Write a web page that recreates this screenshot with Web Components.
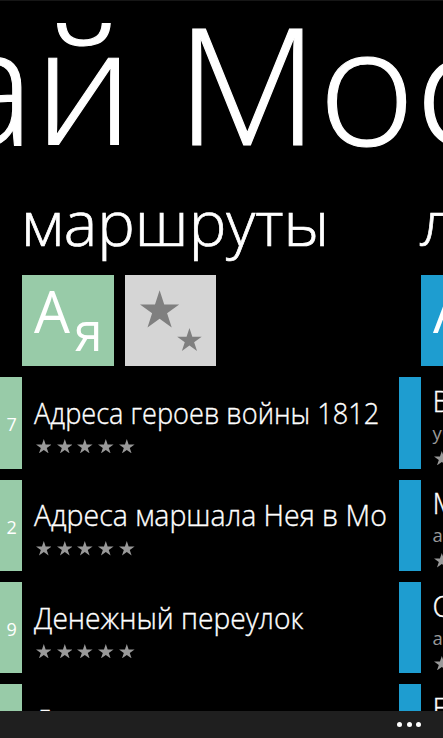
<!DOCTYPE html>
<html lang="ru">
<head>
<meta charset="utf-8">
<title>Узнай Москву</title>
<style>
    html, body {
        margin: 0;
        height: 100%;
        background: #000;
        overflow: hidden;
    }
</style>
</head>
<body>
<city-app></city-app>
<script>
const STAR = '50,0 61.8,36.3 100,36.3 69.1,58.8 80.9,95.1 50,72.7 19.1,95.1 30.9,58.8 0,36.3 38.2,36.3';

// One line of text, stretched to the pixels in "width" or by the factor in "stretch"
class FitText extends HTMLElement {
    constructor() {
        super();
        this.attachShadow({ mode: 'open' });
    }

    connectedCallback() {
        this.shadowRoot.innerHTML = `
            <style>
                :host { display: flex; white-space: nowrap; }
                span { display: block; flex: none; transform-origin: 0 50%; }
            </style>
            <span><slot></slot></span>`;
        requestAnimationFrame(() => this.fit());
    }

    fit() {
        const span = this.shadowRoot.querySelector('span');
        const target = parseFloat(this.getAttribute('width'));
        const factor = target ? target / span.offsetWidth : parseFloat(this.getAttribute('stretch'));
        if (factor) {
            span.style.transform = `scaleX(${factor})`;
        }
    }
}

class StarRating extends HTMLElement {
    constructor() {
        super();
        this.attachShadow({ mode: 'open' });
    }

    connectedCallback() {
        const star = `<svg viewBox="0 0 100 95.1" preserveAspectRatio="none"><polygon points="${STAR}"/></svg>`;
        this.shadowRoot.innerHTML = `
            <style>
                :host { display: flex; gap: 5.2px; padding-left: 2px; }
                svg { width: 15.6px; height: 14.4px; fill: #999; flex: none; }
            </style>
            ${star.repeat(5)}`;
    }
}

class HubTile extends HTMLElement {
    constructor() {
        super();
        this.attachShadow({ mode: 'open' });
    }

    connectedCallback() {
        const stars = `
            <svg viewBox="0 0 91.5 91.5">
                <polygon transform="translate(15 15.3) scale(.392 .39)" points="${STAR}"/>
                <polygon transform="translate(52.2 53) scale(.245 .242)" points="${STAR}"/>
            </svg>`;
        const letters = `
            <svg viewBox="0 0 91.5 91.5">
                <text x="12" y="58.4" font-size="58.5" textLength="36" lengthAdjust="spacingAndGlyphs">А</text>
                <text x="52.5" y="75.8" font-size="55" textLength="28" lengthAdjust="spacingAndGlyphs">я</text>
            </svg>`;
        this.shadowRoot.innerHTML = `
            <style>
                :host { display: block; width: 91.5px; height: 91.3px; flex: none; background: var(--accent); }
                svg { display: block; width: 91.5px; height: 91.5px; }
                text { fill: #fff; font-weight: 400; }
                polygon { fill: #7f7f7f; }
            </style>
            ${this.getAttribute('kind') === 'stars' ? stars : letters}`;
    }
}

class HubRow extends HTMLElement {
    constructor() {
        super();
        this.attachShadow({ mode: 'open' });
    }

    connectedCallback() {
        const note = this.getAttribute('note');
        this.shadowRoot.innerHTML = `
            <style>
                :host { display: flex; height: 91.4px; flex: none; }
                .bar {
                    display: flex;
                    align-items: center;
                    justify-content: flex-end;
                    box-sizing: border-box;
                    width: 22.3px;
                    padding: 3px 5.5px 0 0;
                    flex: none;
                    background: var(--accent);
                    color: #fff;
                    font-size: 18px;
                    font-weight: 400;
                }
                .body {
                    display: flex;
                    flex-direction: column;
                    justify-content: center;
                    padding-left: 11.5px;
                    color: #fff;
                    font-size: 28.7px;
                    line-height: 40px;
                }
                fit-text { -webkit-text-stroke: .35px #fff; }
                .note { color: #999; font-size: 18.5px; font-weight: 400; line-height: 24px; white-space: nowrap; }
                star-rating { margin-top: 6px; }
            </style>
            <div class="bar">${this.getAttribute('count') || ''}</div>
            <div class="body">
                <fit-text width="${this.getAttribute('text-width') || ''}"><slot></slot></fit-text>
                ${note ? `<div class="note">${note}</div>` : ''}
                <star-rating></star-rating>
            </div>`;
    }
}

class HubSection extends HTMLElement {
    constructor() {
        super();
        this.attachShadow({ mode: 'open' });
    }

    connectedCallback() {
        this.shadowRoot.innerHTML = `
            <style>
                :host { display: flex; flex-direction: column; flex: none; }
                .title {
                    height: 95px;
                    padding-left: 21px;
                    box-sizing: border-box;
                    flex: none;
                    color: #fff;
                    font-size: 62px;
                    line-height: 85px;
                    -webkit-text-stroke: .7px #fff;
                }
                .tiles { display: flex; gap: 11px; padding-left: 22.2px; margin-bottom: 11px; }
                .rows { display: flex; flex-direction: column; gap: 11px; }
            </style>
            <div class="title"><fit-text width="${this.getAttribute('title-width') || ''}">${this.getAttribute('heading')}</fit-text></div>
            <div class="tiles"><slot name="tile"></slot></div>
            <div class="rows"><slot></slot></div>`;
    }
}

class AppBar extends HTMLElement {
    constructor() {
        super();
        this.attachShadow({ mode: 'open' });
        this.shadowRoot.innerHTML = `
            <style>
                :host {
                    display: flex;
                    align-items: center;
                    justify-content: flex-end;
                    gap: 4.2px;
                    box-sizing: border-box;
                    height: 27.4px;
                    padding-right: 22.2px;
                    flex: none;
                    background: #1f1f1f;
                }
                i { width: 5px; height: 5px; border-radius: 50%; background: #fff; }
            </style>
            <i></i><i></i><i></i>`;
    }
}

class CityApp extends HTMLElement {
    constructor() {
        super();
        this.attachShadow({ mode: 'open' });
    }

    connectedCallback() {
        this.shadowRoot.innerHTML = `
            <style>
                :host {
                    display: flex;
                    flex-direction: column;
                    box-sizing: border-box;
                    width: 443px;
                    height: 738px;
                    overflow: hidden;
                    background: #000;
                    box-shadow: inset 0 1px #161616;
                    color: #fff;
                    font-family: "Open Sans", "Noto Sans", sans-serif;
                    font-weight: 300;
                }
                header {
                    display: flex;
                    height: 180px;
                    flex: none;
                    font-size: 162px;
                    line-height: 165px;
                    overflow: hidden;
                    -webkit-text-stroke: 1.1px #fff;
                }
                header fit-text { margin-left: -53.5px; }
                main { display: flex; flex: 1; min-height: 0; overflow: hidden; }
                .routes { width: 398.7px; overflow: hidden; --accent: #98cba8; }
                .people { --accent: #1e9dd0; }
                .grey { --accent: #d5d5d5; }
            </style>
            <header><fit-text stretch="1.018">ай Мос</fit-text></header>
            <main>
                <hub-section class="routes" heading="маршруты" title-width="308">
                    <hub-tile slot="tile"></hub-tile>
                    <hub-tile slot="tile" class="grey" kind="stars"></hub-tile>
                    <hub-row count="7" text-width="345.5">Адреса героев войны 1812</hub-row>
                    <hub-row count="2" text-width="353">Адреса маршала Нея в Мо</hub-row>
                    <hub-row count="9" text-width="269">Денежный переулок</hub-row>
                    <hub-row>Д</hub-row>
                </hub-section>
                <hub-section class="people" heading="л">
                    <hub-tile slot="tile"></hub-tile>
                    <hub-row note="уч">В</hub-row>
                    <hub-row note="ар">М</hub-row>
                    <hub-row note="ар">О</hub-row>
                    <hub-row note="ар">Е</hub-row>
                </hub-section>
            </main>
            <app-bar></app-bar>`;
    }
}

customElements.define('fit-text', FitText);
customElements.define('star-rating', StarRating);
customElements.define('hub-tile', HubTile);
customElements.define('hub-row', HubRow);
customElements.define('hub-section', HubSection);
customElements.define('app-bar', AppBar);
customElements.define('city-app', CityApp);
</script>
</body>
</html>
